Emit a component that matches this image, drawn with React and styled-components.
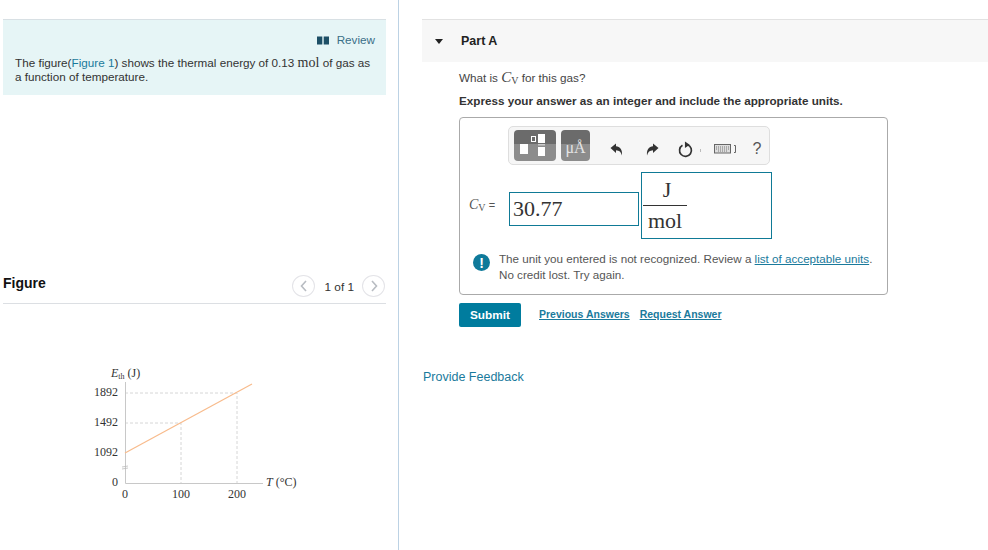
import * as React from "react";
import styled, { createGlobalStyle } from "styled-components";

const GlobalStyle = createGlobalStyle`
  html, body { margin: 0; padding: 0; background: #fff; }
  body { font-family: "Liberation Sans", Arial, sans-serif; color: #333; }
`;

const Page = styled.div`
  display: flex;
  width: 988px;
  height: 550px;
  overflow: hidden;
`;

const LeftColumn = styled.div`
  box-sizing: border-box;
  width: 399px;
  height: 550px;
  padding: 19px 12px 0 3px;
  border-right: 1px solid #bcd2e4;
`;

const Intro = styled.div`
  box-sizing: border-box;
  height: 76px;
  padding: 13px 11px 0 12px;
  background: #e6f5f6;
  border-top: 1px solid #d8e0e4;
  font-size: 11.7px;
  line-height: 14px;
`;

const ReviewRow = styled.div`
  display: flex;
  justify-content: flex-end;
  align-items: center;
  gap: 8px;
  height: 14px;
  margin-bottom: 9px;
  color: #3a6f88;
`;

const Mol = styled.span`
  font-family: "Liberation Serif", serif;
  font-size: 14px;
`;

const TextLink = styled.a`
  color: #1a7a9c;
  text-decoration: ${(p) => (p.$underline ? "underline" : "none")};
`;

const FigureHeader = styled.div`
  box-sizing: border-box;
  display: flex;
  align-items: center;
  justify-content: space-between;
  height: 39px;
  margin-top: 170px;
  padding-bottom: 2px;
  border-bottom: 1px solid #dcdfe3;
`;

const FigureTitle = styled.h4`
  margin: 0;
  font-size: 14px;
  font-weight: 700;
  color: #111;
`;

const Pager = styled.div`
  display: flex;
  align-items: center;
  margin: 6px 1px 0 0;
  font-size: 11.8px;
  color: #333;
`;

const PagerText = styled.span`
  margin: 2px 8px 0 9px;
`;

const PagerButton = styled.span`
  box-sizing: border-box;
  display: flex;
  align-items: center;
  justify-content: center;
  width: 23px;
  height: 22px;
  border: 1px solid #e4e4e8;
  border-radius: 50%;
`;

const ChartWrap = styled.div`
  margin-top: 55px;
  margin-left: 77px;
  width: 230px;
  height: 150px;
`;

const RightColumn = styled.div`
  flex: 1;
  padding: 19px 0 0 23px;
`;

const PartHeader = styled.div`
  box-sizing: border-box;
  display: flex;
  align-items: center;
  height: 43px;
  background: #f7f7f7;
  border-top: 1px solid #e2e2e2;
  font-size: 12.5px;
  font-weight: 700;
  color: #222;
`;

const Caret = styled.span`
  width: 0;
  height: 0;
  margin: 0 18px 0 13px;
  border-left: 4.5px solid transparent;
  border-right: 4.5px solid transparent;
  border-top: 5px solid #222;
`;

const PartBody = styled.div`
  padding: 7px 0 0 37px;
`;

const Question = styled.div`
  height: 16px;
  font-size: 11.7px;
  line-height: 16px;
  color: #444;
`;

const Instruction = styled.div`
  margin-top: 9px;
  height: 14px;
  font-size: 11.7px;
  line-height: 14px;
  font-weight: 700;
  color: #333;
`;

const AnswerBox = styled.div`
  box-sizing: border-box;
  width: 429px;
  height: 178px;
  margin-top: 9px;
  padding: 8px 0 0 9px;
  border: 1px solid #aaa;
  border-radius: 4px;
`;

const Toolbar = styled.div`
  box-sizing: border-box;
  display: flex;
  align-items: center;
  width: 262px;
  height: 39px;
  margin-left: 39px;
  padding-left: 5px;
  background: #f6f6f6;
  border: 1px solid #dedede;
  border-radius: 5px;
`;

const ToolGroup = styled.div`
  flex: none;
  box-sizing: border-box;
  display: flex;
  align-items: center;
  justify-content: center;
  width: ${(p) => p.$w}px;
  height: 31px;
  margin-right: 5px;
  padding-top: ${(p) => p.$pad || 0}px;
  border-radius: 4px;
  background: linear-gradient(#6b6b6b 0 45%, #8c8c8c 45% 100%);
  color: #e4e4e4;
  font-family: "Liberation Serif", serif;
  font-size: 16px;
`;

const ToolIcon = styled.span`
  flex: none;
  position: relative;
  display: flex;
  align-items: center;
  justify-content: center;
  width: ${(p) => p.$w}px;
  margin-top: 7px;
  color: #555;
  font-size: 16px;
`;

const ToolTick = styled.span`
  position: absolute;
  left: -5px;
  top: 5px;
  width: 1px;
  height: 3px;
  background: #bbb;
`;

const MathRow = styled.div`
  display: flex;
  align-items: center;
  margin-top: 7px;
`;

const VarLabel = styled.span`
  width: 40px;
  margin-top: -2px;
  font-size: 11px;
  color: #555;
  white-space: nowrap;
`;

const VarC = styled.i`
  font-family: "Liberation Serif", serif;
  font-size: ${(p) => p.$size || 15}px;
`;

const VarSub = styled.span`
  font-family: "Liberation Serif", serif;
  font-size: ${(p) => p.$size || 10}px;
  position: relative;
  top: 2px;
`;

const ValueBox = styled.div`
  box-sizing: border-box;
  width: 130px;
  height: 34px;
  margin-top: 7px;
  padding-left: 3px;
  border: 1px solid #0f7a96;
  font-family: "Liberation Serif", serif;
  font-size: 22px;
  line-height: 32px;
  color: #333;
`;

const UnitBox = styled.div`
  box-sizing: border-box;
  width: 131px;
  height: 67px;
  margin-left: 2px;
  padding: 5px 0 0 1px;
  border: 1px solid #0f7a96;
  font-family: "Liberation Serif", serif;
  font-size: 22px;
  color: #333;
`;

const Fraction = styled.div`
  width: 44px;
  text-align: center;
  line-height: 24px;
`;

const Numerator = styled.div`
  box-sizing: border-box;
  height: 28px;
  padding-left: 4px;
  border-bottom: 1px solid #333;
`;

const Denominator = styled.div`
  height: 30px;
  padding-top: 3px;
`;

const Feedback = styled.div`
  display: flex;
  gap: 9px;
  margin: 12px 0 0 4px;
  font-size: 11.65px;
  line-height: 16px;
  color: #555;
`;

const AlertIcon = styled.span`
  flex: none;
  display: flex;
  align-items: center;
  justify-content: center;
  width: 17px;
  height: 17px;
  margin-top: 3px;
  border-radius: 50%;
  background: #0f7a9a;
  color: #fff;
  font-size: 14px;
  font-weight: 700;
`;

const Actions = styled.div`
  display: flex;
  align-items: center;
  margin-top: 8px;
`;

const SubmitButton = styled.button`
  width: 62px;
  height: 24px;
  margin-right: 18px;
  padding: 0;
  border: 0;
  border-radius: 2px;
  background: #007c9e;
  color: #fff;
  font-family: inherit;
  font-size: 11.8px;
  font-weight: 700;
`;

const ActionLink = styled.a`
  margin: -2px 10px 0 0;
  font-size: 10.5px;
  font-weight: 700;
  color: #1a7a9c;
  text-decoration: underline;
`;

const ProvideFeedback = styled.a`
  display: block;
  margin: 42px 0 0 1px;
  font-size: 12.5px;
  line-height: 16px;
  color: #1a7a9c;
`;

function BookIcon() {
  return (
    <svg width="12" height="9" viewBox="0 0 12 9">
      <rect x="0" y="0.5" width="5.3" height="8" fill="#1d4f66" />
      <rect x="6.7" y="0.5" width="5.3" height="8" fill="#1d4f66" />
    </svg>
  );
}

function Chevron({ flip }) {
  return (
    <svg width="8" height="12" viewBox="0 0 8 12">
      <path d={flip ? "M2 1l4.5 5L2 11" : "M6 1L1.5 6 6 11"} fill="none" stroke="#b8bcc2" strokeWidth="1.6" />
    </svg>
  );
}

function EnergyChart() {
  const serif = { fontFamily: "'Liberation Serif', serif", fontSize: 12, fill: "#333" };
  return (
    <svg width="230" height="150" viewBox="80 358 230 150">
      <path d="M125 392H237V482M125 422H181V482" fill="none" stroke="#d6d6d6" strokeWidth="1" strokeDasharray="3 2" />
      <path d="M125.5 381V482.5H263" fill="none" stroke="#c8c8c8" strokeWidth="1" />
      <path d="M122 466l6-1M122 468l6-1" stroke="#bbb" strokeWidth="0.8" />
      <path d="M125 452L252 383" fill="none" stroke="#f8bb8c" strokeWidth="1.2" />
      <text x="111" y="376" style={serif}><tspan fontStyle="italic">E</tspan><tspan fontSize="8" dy="2">th</tspan><tspan dy="-2"> (J)</tspan></text>
      <text x="94" y="395" style={serif}>1892</text>
      <text x="94" y="425" style={serif}>1492</text>
      <text x="94" y="455" style={serif}>1092</text>
      <text x="112" y="485" style={serif}>0</text>
      <text x="122" y="497" style={serif}>0</text>
      <text x="172" y="497" style={serif}>100</text>
      <text x="228" y="497" style={serif}>200</text>
      <text x="266" y="485" style={serif}><tspan fontStyle="italic">T</tspan> (°C)</text>
    </svg>
  );
}

function TemplatesIcon() {
  return (
    <svg width="42" height="31" viewBox="0 0 42 31">
      <rect x="6" y="14" width="8" height="10" fill="#fff" />
      <rect x="17.5" y="6.5" width="4" height="5" fill="none" stroke="#fff" strokeWidth="1" />
      <rect x="24" y="4" width="7" height="9" fill="#fff" />
      <rect x="24" y="14" width="7" height="1.5" fill="#ccc" />
      <rect x="24" y="17" width="7" height="9" fill="#fff" />
    </svg>
  );
}

function Undo({ flip }) {
  return (
    <svg width="13" height="13" viewBox="0 0 13 13" style={flip ? { transform: "scaleX(-1)" } : undefined}>
      <path d="M0.5 5L6 0.5V3.3C10 3.5 12.5 6.5 12 12.5 11 9 9.5 7.3 6 7.2V10z" fill="#333" />
    </svg>
  );
}

function Reset() {
  return (
    <svg width="16" height="17" viewBox="0 0 15 16">
      <path d="M9 3.6A5.6 5.6 0 1 1 4.2 4" fill="none" stroke="#333" strokeWidth="1.6" />
      <path d="M6.5 0.5L11 3.6 6.5 6.5z" fill="#333" />
    </svg>
  );
}

function Keyboard() {
  return (
    <svg width="24" height="10" viewBox="0 0 24 10">
      <rect x="0.5" y="0.5" width="16" height="8.5" fill="#ddd" stroke="#666" />
      <path d="M2 3h13M2 5h13M4 7h9" stroke="#777" strokeWidth="1" strokeDasharray="1 1" />
      <path d="M20 1.5h1.5v7H20" fill="none" stroke="#666" />
    </svg>
  );
}

export default function App() {
  return (
    <Page>
      <GlobalStyle />
      <LeftColumn>
        <Intro>
          <ReviewRow>
            <BookIcon />
            <span>Review</span>
          </ReviewRow>
          The figure(<TextLink>Figure 1</TextLink>) shows the thermal energy of 0.13 <Mol>mol</Mol> of gas as a function of temperature.
        </Intro>
        <FigureHeader>
          <FigureTitle>Figure</FigureTitle>
          <Pager>
            <PagerButton><Chevron /></PagerButton>
            <PagerText>1 of 1</PagerText>
            <PagerButton><Chevron flip /></PagerButton>
          </Pager>
        </FigureHeader>
        <ChartWrap>
          <EnergyChart />
        </ChartWrap>
      </LeftColumn>
      <RightColumn>
        <PartHeader>
          <Caret />
          Part A
        </PartHeader>
        <PartBody>
          <Question>
            What is <VarC>C</VarC><VarSub>V</VarSub> for this gas?
          </Question>
          <Instruction>Express your answer as an integer and include the appropriate units.</Instruction>
          <AnswerBox>
            <Toolbar>
              <ToolGroup $w={42}><TemplatesIcon /></ToolGroup>
              <ToolGroup $w={29} $pad={4}>μÅ</ToolGroup>
              <ToolIcon $w={42}><Undo /></ToolIcon>
              <ToolIcon $w={30}><Undo flip /></ToolIcon>
              <ToolIcon $w={38}><Reset /></ToolIcon>
              <ToolIcon $w={42}><ToolTick /><Keyboard /></ToolIcon>
              <ToolIcon $w={20}>?</ToolIcon>
            </Toolbar>
            <MathRow>
              <VarLabel><VarC $size={14}>C</VarC><VarSub $size={10}>V</VarSub> =</VarLabel>
              <ValueBox>30.77</ValueBox>
              <UnitBox>
                <Fraction>
                  <Numerator>J</Numerator>
                  <Denominator>mol</Denominator>
                </Fraction>
              </UnitBox>
            </MathRow>
            <Feedback>
              <AlertIcon>!</AlertIcon>
              <div>
                The unit you entered is not recognized. Review a <TextLink $underline>list of acceptable units</TextLink>.
                <br />
                No credit lost. Try again.
              </div>
            </Feedback>
          </AnswerBox>
          <Actions>
            <SubmitButton>Submit</SubmitButton>
            <ActionLink>Previous Answers</ActionLink>
            <ActionLink>Request Answer</ActionLink>
          </Actions>
        </PartBody>
        <ProvideFeedback>Provide Feedback</ProvideFeedback>
      </RightColumn>
    </Page>
  );
}
